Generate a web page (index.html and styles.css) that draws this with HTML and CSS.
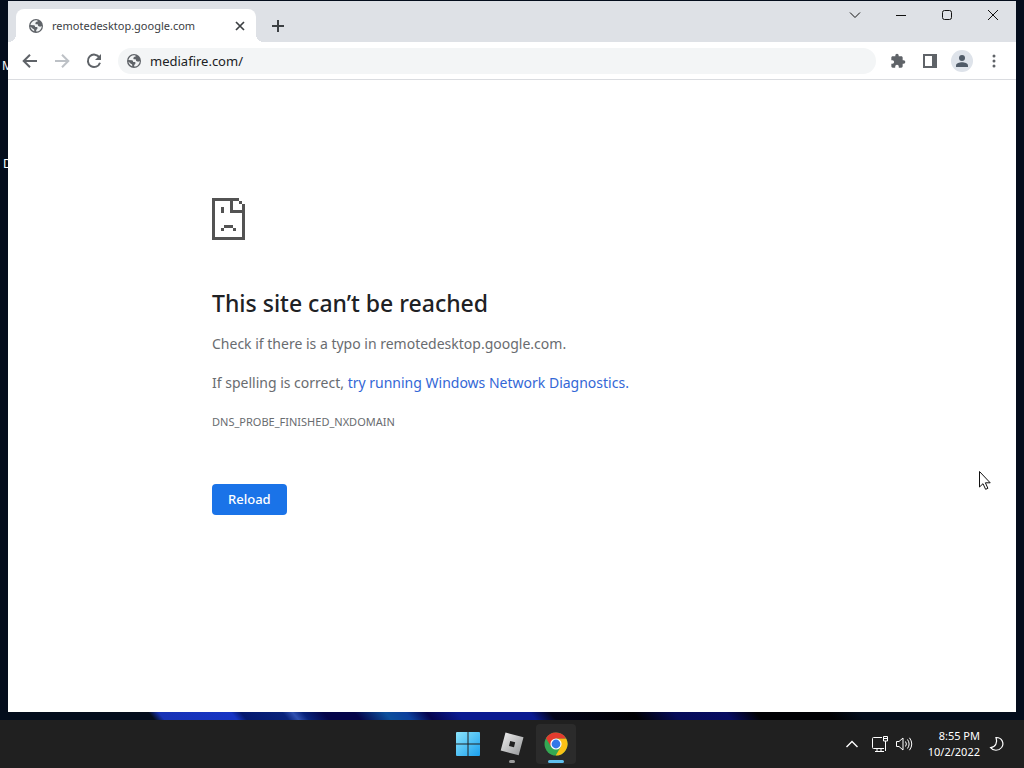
FILE: index.html
```html
<!DOCTYPE html>
<html lang="en">
<head>
  <meta charset="UTF-8" />
  <meta name="viewport" content="width=device-width, initial-scale=1" />
  <title>remotedesktop.google.com</title>
  <link rel="stylesheet" href="styles.css">
</head>
<body>

<svg class="symbols" aria-hidden="true">
  <symbol id="globe" viewBox="0 0 16 16">
    <circle cx="8" cy="8" r="7" fill="#5f6368" />
    <path fill="#f1f3f4" d="M9.2 2.3C6 1.9 3.2 3.8 2.4 7l3.5.2c1 .1 1.2.8 1.2 1.7l1.6.2c1 .2 1.1 1.1.5 1.8l-1 1v1.7c3.2-.2 5.5-2.6 5.5-5.7l-1.6.8-1.9-.8-.5-1.6-1.9-.1-.6-1.1 1.2-1.4 1.4-.1z" />
    <path fill="#f1f3f4" d="M2.4 8.6c.3 2.2 1.8 3.9 3.9 4.7l-.2-1.8-1.6-1z" />
  </symbol>
</svg>

<div class="desktop">
  <span class="desktop-label label-m">M</span>
  <span class="desktop-label label-d">D</span>

  <div class="window">
    <header class="tab-strip">
      <div class="tab">
        <svg class="icon-16"><use href="#globe" /></svg>
        <span class="tab-title">remotedesktop.google.com</span>
        <button class="tab-close" aria-label="Close tab">
          <svg width="10" height="10" viewBox="0 0 10 10"><path d="M1 1l8 8M9 1L1 9" stroke="#3c4043" stroke-width="1.7" /></svg>
        </button>
      </div>
      <button class="new-tab" aria-label="New tab">
        <svg width="14" height="14" viewBox="0 0 14 14"><path d="M7 1v12M1 7h12" stroke="#3c4043" stroke-width="2" /></svg>
      </button>
      <div class="captions">
        <button aria-label="Search tabs"><svg width="12" height="12" viewBox="0 0 12 12"><path d="M1 3.5l5 5 5-5" /></svg></button>
        <button aria-label="Minimize"><svg width="12" height="12" viewBox="0 0 12 12"><path d="M1 6.5h10" /></svg></button>
        <button aria-label="Maximize"><svg width="12" height="12" viewBox="0 0 12 12"><rect x="1.5" y="1.5" width="9" height="9" rx="2" /></svg></button>
        <button aria-label="Close"><svg width="12" height="12" viewBox="0 0 12 12"><path d="M1 1l10 10M11 1L1 11" /></svg></button>
      </div>
    </header>

    <nav class="toolbar">
      <button class="tool" aria-label="Back">
        <svg width="16" height="16" viewBox="0 0 16 16"><path d="M15 8H2M8 1.7L1.7 8 8 14.3" fill="none" stroke="#5f6368" stroke-width="2" /></svg>
      </button>
      <button class="tool" aria-label="Forward" disabled>
        <svg width="16" height="16" viewBox="0 0 16 16"><path d="M1 8h13M8 1.7L14.3 8 8 14.3" fill="none" stroke="#bdc1c6" stroke-width="2" /></svg>
      </button>
      <button class="tool" aria-label="Reload page">
        <svg width="16" height="16" viewBox="0 0 16 16"><path d="M13.4 4.6A6.2 6.2 0 1 0 14 9.7" fill="none" stroke="#5f6368" stroke-width="2" /><path d="M15 1v6H9z" fill="#5f6368" /></svg>
      </button>
      <div class="omnibox">
        <svg class="icon-16"><use href="#globe" /></svg>
        <input type="text" value="mediafire.com/" aria-label="Address and search bar">
      </div>
      <button class="tool" aria-label="Extensions">
        <svg width="16" height="16" viewBox="0 0 24 24"><path fill="#5f6368" d="M20.5 11H19V7c0-1.100-.9-2-2-2h-4V3.500a2.500 2.500 0 0 0-5 0V5H4c-1.100 0-2 .9-2 2v3.800h1.500a2.700 2.700 0 0 1 0 5.400H2V20c0 1.100.9 2 2 2h3.800v-1.500a2.700 2.700 0 0 1 5.400 0V22H17c1.100 0 2-.9 2-2v-4h1.500a2.500 2.500 0 0 0 0-5z" /></svg>
      </button>
      <button class="tool" aria-label="Side panel">
        <svg width="14" height="14" viewBox="0 0 14 14"><path d="M1 1h12v12H1z" fill="none" stroke="#5f6368" stroke-width="2" /><path d="M9 1h4v12H9z" fill="#5f6368" /></svg>
      </button>
      <button class="tool" aria-label="Profile">
        <svg width="22" height="22" viewBox="0 0 22 22"><circle cx="11" cy="11" r="11" fill="#dee3ea" /><circle cx="11" cy="8" r="3" fill="#505b68" /><path d="M5 17v-1.500c0-2.300 3.500-3.300 6-3.300s6 1 6 3.300V17z" fill="#505b68" /></svg>
      </button>
      <button class="tool" aria-label="Menu">
        <svg width="4" height="14" viewBox="0 0 4 14" fill="#5f6368"><circle cx="2" cy="2" r="1.500" /><circle cx="2" cy="7" r="1.500" /><circle cx="2" cy="12" r="1.500" /></svg>
      </button>
    </nav>

    <main class="page">
      <div class="error">
        <!-- sad page, drawn on an 11 x 14 pixel grid -->
        <svg class="error-icon" width="33" height="42" viewBox="0 0 11 14" shape-rendering="crispEdges">
          <path fill="#535353" d="M0 0h9v1H7v3h3V2h1v12H0zM1 1v12h9V5H6V1zM9 1h1v1H9zM3 3h1v2H3zM4 9h3v1H4zM3 10h1v1H3zM7 10h1v1H7z" fill-rule="evenodd" />
        </svg>
        <h1>This site can’t be reached</h1>
        <p>Check if there is a typo in remotedesktop.google.com.</p>
        <p>If spelling is correct, <a href="#">try running Windows Network Diagnostics.</a></p>
        <div class="error-code">DNS_PROBE_FINISHED_NXDOMAIN</div>
        <button class="reload">Reload</button>
      </div>
    </main>
  </div>

  <svg class="cursor" width="14" height="21" viewBox="0 0 14 21"><path d="M1.500 1.500v15.500l3.500-3.300 2.600 5.600 2.300-1-2.500-5.500h4.800z" fill="#fff" stroke="#111" /></svg>
</div>

<footer class="taskbar">
  <div class="apps">
    <button aria-label="Start">
      <svg width="24" height="24" viewBox="0 0 24 24">
        <defs><linearGradient id="win" gradientUnits="userSpaceOnUse" x1="0" y1="0" x2="24" y2="24"><stop offset="0" stop-color="#8be4fb" /><stop offset="1" stop-color="#1ba0ee" /></linearGradient></defs>
        <path fill="url(#win)" d="M1 0h10.500v11.500H0V1a1 1 0 0 1 1-1zM12.500 0H23a1 1 0 0 1 1 1v10.500H12.500zM0 12.500h11.500V24H1a1 1 0 0 1-1-1zM12.500 12.500H24V23a1 1 0 0 1-1 1H12.500z" />
      </svg>
    </button>
    <button class="running" aria-label="Roblox">
      <svg width="24" height="24" viewBox="0 0 24 24">
        <defs><linearGradient id="rbx" x1="0" y1="0" x2="1" y2="1"><stop offset="0" stop-color="#f2f2f2" /><stop offset="1" stop-color="#929496" /></linearGradient></defs>
        <path fill="url(#rbx)" fill-rule="evenodd" d="M5.500.500l18 4.800-4.800 18L.700 18.500zM10.200 9l-1.200 5 5 1.200 1.200-5z" />
      </svg>
    </button>
    <button class="running active" aria-label="Google Chrome">
      <svg width="24" height="24" viewBox="0 0 24 24">
        <circle cx="12" cy="12" r="11.500" fill="#34a853" />
        <path fill="#fbc116" d="M12 6.500h10.100A11.500 11.500 0 0 1 11.700 23.500l5.100-8.800z" />
        <path fill="#e33b2e" d="M2 6.300a11.500 11.500 0 0 1 20 .2H12l-4.800 8.200z" />
        <circle cx="12" cy="12" r="5.600" fill="#fff" />
        <circle cx="12" cy="12" r="4.400" fill="#3478e8" />
      </svg>
    </button>
  </div>
  <div class="tray">
    <button aria-label="Show hidden icons"><svg width="14" height="18" viewBox="0 0 14 18"><path stroke-width="1.4" d="M1.500 12L7 6.500l5.500 5.500" /></svg></button>
    <button aria-label="Network"><svg width="18" height="18" viewBox="0 0 18 18"><path d="M11 2.500H2.500Q1.500 2.500 1.500 3.500v9q0 1 1 1H13M6 13.500v3M10 13.500v3M4 16.500h9M12.500 1.500h4v4.500h-4zM12.500 3.500h4M14.500 6v10" /></svg></button>
    <button aria-label="Volume"><svg width="18" height="18" viewBox="0 0 18 18"><path d="M1.500 6.500v5H4l4 3.500V3L4 6.500zM10.500 6.500q1.800 2.500 0 5M12.500 4.500q3.200 4.500 0 9M14.500 2.800q4.500 6.200 0 12.400" /></svg></button>
    <div class="clock">
      <time>8:55 PM</time>
      <time datetime="2022-10-02">10/2/2022</time>
    </div>
    <button aria-label="Focus assist"><svg width="16" height="18" viewBox="0 0 16 18"><path stroke-width="1.2" d="M7 2.500c6-.3 8.600 6 5.600 10-3 3.800-8.600 3.500-11 .2C6.600 12 8.800 7.500 7 2.500z" /></svg></button>
  </div>
</footer>

</body>
</html>
```
FILE: styles.css
```css
:root {
  --strip: #dee1e6;
  --text: #202124;
  --grey: #696c70;
  --blue: #1a73e8;
  --taskbar: #202020;
}

* {
  box-sizing: border-box;
  margin: 0;
  padding: 0;
}

body {
  display: flex;
  flex-direction: column;
  height: 100vh;
  overflow: hidden;
  font-family: 'Segoe UI', 'Noto Sans', sans-serif;
  color: var(--text);
}

button {
  display: flex;
  align-items: center;
  justify-content: center;
  border: none;
  background: none;
  font-family: inherit;
}

.symbols {
  display: none;
}

.icon-16 {
  width: 16px;
  height: 16px;
  flex: none;
}

/* Desktop */
.desktop {
  flex: 1;
  min-height: 0;
  position: relative;
  display: flex;
  padding: 1px 8px 8px;
  background:
    linear-gradient(50deg, transparent 15%, #1732b5 16%, #1634c4 23%, #04186e 24%, #08227a 28%, #3050b0 29%, #08227a 30%, #040448 32%, #040448 35%, #0c4f9c 38%, #0c3f9c 40%, #05044e 42%, #0a1a90 45%, #0a1a90 52%, #03041a 54%, #010104 62%, #060b58 66%, #070c60 71%, #010104 74%, #010104 81%, transparent 84%) bottom / 100% 8px no-repeat,
    #040d1c;
}

.desktop-label {
  position: absolute;
  font-size: 12px;
  line-height: 16px;
  color: #fff;
}

.label-m {
  left: 2px;
  top: 58px;
}

.label-d {
  left: 3px;
  top: 156px;
}

.cursor {
  position: absolute;
  left: 978px;
  top: 470px;
}

/* Browser window */
.window {
  position: relative;
  flex: 1;
  display: flex;
  flex-direction: column;
  background: #fff;
}

.tab-strip {
  display: flex;
  height: 41px;
  padding-left: 8px;
  background: var(--strip);
}

.tab {
  position: relative;
  display: flex;
  align-items: center;
  gap: 8px;
  width: 240px;
  margin-top: 8px;
  padding: 0 8px 0 12px;
  border-radius: 8px 8px 0 0;
  background: #fff;
}

.tab::before,
.tab::after {
  content: "";
  position: absolute;
  bottom: 0;
  width: 8px;
  height: 8px;
}

.tab::before {
  right: 100%;
  background: radial-gradient(circle at 0 0, transparent 8px, #fff 8px);
}

.tab::after {
  left: 100%;
  background: radial-gradient(circle at 100% 0, transparent 8px, #fff 8px);
}

.tab-title {
  flex: 1;
  font-size: 11px;
  line-height: 16px;
  color: #3c4043;
  white-space: nowrap;
}

.tab-close {
  width: 16px;
  height: 16px;
}

.new-tab {
  width: 28px;
  height: 28px;
  margin: 11px 0 0 8px;
}

.captions {
  display: flex;
  margin-left: auto;
}

.captions button {
  width: 46px;
  height: 28px;
}

.captions svg {
  fill: none;
  stroke: #111;
}

.toolbar {
  display: flex;
  align-items: center;
  height: 38px;
  padding: 0 6px;
  border-bottom: 1px solid #dadce0;
}

.tool {
  width: 32px;
  height: 32px;
}

.omnibox {
  flex: 1;
  display: flex;
  align-items: center;
  gap: 8px;
  height: 26px;
  margin: 0 6px 0 8px;
  padding: 0 8px;
  border-radius: 13px;
  background: #f3f5f6;
}

.omnibox input {
  flex: 1;
  border: none;
  outline: none;
  background: none;
  font-family: inherit;
  font-size: 13px;
  color: var(--text);
}

/* Error page */
.page {
  flex: 1;
  padding: 118px 24px 0;
}

.error {
  max-width: 600px;
  margin: 0 auto;
  font-size: 14px;
  line-height: 24px;
  color: var(--grey);
}

.error-icon {
  display: block;
}

.error h1 {
  margin: 48px 0 14px;
  font-size: 23px;
  font-weight: 500;
  line-height: 30px;
  color: var(--text);
}

.error p {
  margin-bottom: 15px;
}

.error a {
  color: #3367d6;
  text-decoration: none;
}

.error-code {
  font-size: 11px;
}

.reload {
  margin-top: 50px;
  padding: 0 16px 1px;
  height: 31px;
  border-radius: 4px;
  background: var(--blue);
  color: #fff;
  font-size: 13px;
  font-weight: 500;
}

/* Taskbar */
.taskbar {
  display: grid;
  grid-template-columns: 1fr auto 1fr;
  align-items: center;
  height: 48px;
  background: var(--taskbar);
}

.apps {
  grid-column: 2;
  display: flex;
  gap: 4px;
}

.apps button {
  position: relative;
  width: 40px;
  height: 40px;
  border-radius: 4px;
}

.apps .active {
  background: #2b2b2b;
}

.running::after {
  content: "";
  position: absolute;
  bottom: 1px;
  left: 50%;
  width: 6px;
  height: 3px;
  border-radius: 2px;
  background: #9a9a9a;
  transform: translateX(-50%);
}

.active::after {
  width: 16px;
  background: #5fc0ee;
}

.tray {
  display: flex;
  align-items: center;
  justify-content: flex-end;
  gap: 6px;
  padding-right: 19px;
}

.tray button:first-child {
  margin-right: 6px;
}

.tray svg {
  fill: none;
  stroke: #fff;
}

.clock {
  display: flex;
  flex-direction: column;
  margin: 0 3px 0 9px;
  font-size: 11px;
  line-height: 16px;
  text-align: right;
  color: #fff;
}
```
